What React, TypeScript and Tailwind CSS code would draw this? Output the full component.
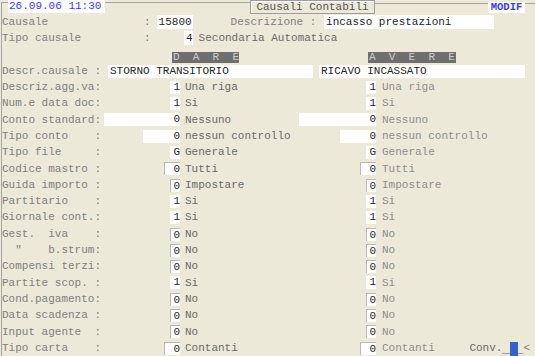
import React from 'react';

type Row = {
  label: string;
  lv: string;
  lw: number;
  ld: string;
  rv: string;
  rw: number;
  rd: string;
  sunken?: boolean;
};

const ROWS: Row[] = [
  { label: 'Descriz.agg.va:', lv: '1', lw: 10, ld: 'Una riga', rv: '1', rw: 10, rd: 'Una riga' },
  { label: 'Num.e data doc:', lv: '1', lw: 10, ld: 'Si', rv: '1', rw: 10, rd: 'Si' },
  { label: 'Conto standard:', lv: '0', lw: 76, ld: 'Nessuno', rv: '0', rw: 77, rd: 'Nessuno' },
  { label: 'Tipo conto    :', lv: '0', lw: 37, ld: 'nessun controllo', rv: '0', rw: 36, rd: 'nessun controllo' },
  { label: 'Tipo file     :', lv: 'G', lw: 10, ld: 'Generale', rv: 'G', rw: 10, rd: 'Generale' },
  { label: 'Codice mastro :', lv: '0', lw: 16, ld: 'Tutti', rv: '0', rw: 16, rd: 'Tutti', sunken: true },
  { label: 'Guida importo :', lv: '0', lw: 10, ld: 'Impostare', rv: '0', rw: 10, rd: 'Impostare', sunken: true },
  { label: 'Partitario    :', lv: '1', lw: 10, ld: 'Si', rv: '1', rw: 10, rd: 'Si' },
  { label: 'Giornale cont.:', lv: '1', lw: 10, ld: 'Si', rv: '1', rw: 10, rd: 'Si' },
  { label: 'Gest.  iva    :', lv: '0', lw: 10, ld: 'No', rv: '0', rw: 10, rd: 'No', sunken: true },
  { label: '  "    b.strum:', lv: '0', lw: 10, ld: 'No', rv: '0', rw: 10, rd: 'No', sunken: true },
  { label: 'Compensi terzi:', lv: '0', lw: 10, ld: 'No', rv: '0', rw: 10, rd: 'No', sunken: true },
  { label: 'Partite scop. :', lv: '1', lw: 10, ld: 'Si', rv: '1', rw: 10, rd: 'Si' },
  { label: 'Cond.pagamento:', lv: '0', lw: 10, ld: 'No', rv: '0', rw: 10, rd: 'No', sunken: true },
  { label: 'Data scadenza :', lv: '0', lw: 10, ld: 'No', rv: '0', rw: 10, rd: 'No', sunken: true },
  { label: 'Input agente  :', lv: '0', lw: 10, ld: 'No', rv: '0', rw: 10, rd: 'No', sunken: true },
];

const Box = ({ value, width, sunken }: { value: string; width: number; sunken?: boolean }) => (
  <div
    className={`h-[13px] bg-white text-right leading-[13px] text-[#262626] ${sunken ? 'border-l border-t border-[#b8b8b8]' : ''}`}
    style={{ width }}
  >
    {value}
  </div>
);

const FieldRow = ({ r, children }: { r: Row; children?: React.ReactNode }) => (
  <div className="flex h-[16.3px] items-center">
    <div className="flex w-[178px] items-center justify-between">
      <span className="whitespace-pre text-[#808080]">{r.label}</span>
      <Box value={r.lv} width={r.lw} sunken={r.sunken} />
    </div>
    <div className="flex w-[196px] items-center justify-between">
      <span className="whitespace-pre pl-[5px] text-[#6a6a6a]">{r.ld}</span>
      <Box value={r.rv} width={r.rw} sunken={r.sunken} />
    </div>
    <span className="flex-1 whitespace-pre pl-[6px] text-[#8e8e8e]">{r.rd}</span>
    {children}
  </div>
);

const App: React.FC = () => {
  return (
    <div className="h-[356px] w-[535px] overflow-hidden bg-[#ECE9D8] font-['Liberation_Mono',monospace] text-[11px]">
      {/* barra titolo */}
      <div className="flex h-[14px] items-start">
        <div className="mt-[2px] ml-[1px] h-[12px] w-[7px] border-l border-t border-[#a4a4a4]" />
        <div className="h-[13px] w-[97px] bg-white pl-[1px] leading-[13px] text-[#3a3aff]">26.09.06 11:30</div>
        <div className="mt-[2px] w-[145px] border-t border-[#a4a4a4]" />
        <div className="h-[14px] w-[125px] border border-[#9c9c9c] bg-[#ECE9D8] text-center leading-[12px] text-[#555555] shadow-[inset_1px_1px_0_#ffffff]">
          Causali Contabili
        </div>
        <div className="mt-[3px] w-[113px] border-t border-[#a4a4a4]" />
        <div className="mt-[2px] h-[11px] w-[37px] bg-white text-center text-[10.5px] leading-[11px] font-bold text-[#3a3aff]">MODIF</div>
        <div className="mt-[3px] flex-1 border-t border-[#a4a4a4]" />
      </div>

      <div className="ml-[1px] h-[342px] border-l border-[#a4a4a4]">
        <div className="flex h-[16.3px] items-center">
          <span className="w-[142px] text-[#808080]">Causale</span>
          <span className="text-[#808080]">:</span>
          <div className="ml-[6px] h-[14px] w-[36px] bg-white pl-[2px] leading-[14px] text-[#262626]">15800</div>
          <span className="ml-[38px] whitespace-pre text-[#808080]">Descrizione : </span>
          <div className="ml-[1px] h-[14px] w-[170px] bg-white pl-[2px] leading-[14px] text-[#262626]">incasso prestazioni</div>
        </div>
        <div className="flex h-[16.3px] items-center">
          <span className="w-[142px] text-[#808080]">Tipo causale</span>
          <span className="text-[#808080]">:</span>
          <div className="ml-[33px] h-[14px] w-[9px] bg-white text-right leading-[14px] text-[#262626]">4</div>
          <span className="ml-[6px] text-[#6a6a6a]">Secondaria Automatica</span>
        </div>
        <div className="flex h-[16.3px] items-end">
          <div className="ml-[170px] h-[11px] w-[67px] overflow-hidden bg-[#6f6f6f] pl-[1px] leading-[11px] whitespace-pre text-[#cdcdcd]">D  A  R  E</div>
          <div className="ml-[129px] h-[11px] w-[88px] overflow-hidden bg-[#6f6f6f] pl-[1px] leading-[11px] whitespace-pre text-[#cdcdcd]">A  V  E  R  E</div>
        </div>
        <div className="flex h-[16.3px] items-center">
          <span className="w-[106px] whitespace-pre text-[#808080]">Descr.causale :</span>
          <div className="h-[13px] w-[205px] bg-white pl-[2px] leading-[13px] text-[#262626]">STORNO TRANSITORIO</div>
          <div className="ml-[6px] h-[13px] w-[206px] bg-white pl-[2px] leading-[13px] text-[#262626]">RICAVO INCASSATO</div>
        </div>

        {ROWS.map(r => (
          <FieldRow key={r.label} r={r} />
        ))}

        <FieldRow r={{ label: 'Tipo carta    :', lv: '0', lw: 16, ld: 'Contanti', rv: '0', rw: 16, rd: 'Contanti', sunken: true }}>
          <div className="flex items-end pr-[5px]">
            <span className="text-[#6a6a6a]">Conv.</span>
            <div className="mb-[2px] w-[8px] border-b border-[#9a9a9a]" />
            <div className="h-[14px] w-[8px] bg-[#3364c8]" />
            <div className="mb-[2px] w-[5px] border-b border-[#9a9a9a]" />
            <span className="text-[#7a7a7a]">&lt;</span>
          </div>
        </FieldRow>
      </div>
    </div>
  );
};

export default App;
